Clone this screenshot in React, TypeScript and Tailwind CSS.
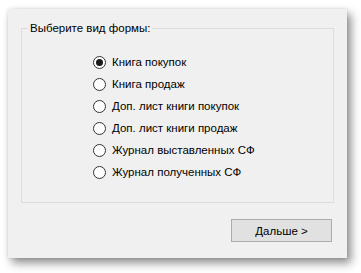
const options = [
  "Книга покупок",
  "Книга продаж",
  "Доп. лист книги покупок",
  "Доп. лист книги продаж",
  "Журнал выставленных СФ",
  "Журнал полученных СФ",
];

function Radio({ checked }: { checked: boolean }) {
  return (
    <span className="flex h-[13px] w-[13px] shrink-0 items-center justify-center rounded-full border border-[#333] bg-white">
      {checked && <span className="h-[7px] w-[7px] rounded-full bg-[#1a1a1a]" />}
    </span>
  );
}

export default function App() {
  return (
    <div className="h-[273px] w-[361px] bg-white pl-[8px] pt-[9px] font-['Liberation_Sans',sans-serif] text-[11.5px] text-black">
      <div className="flex h-[249px] w-[339px] flex-col bg-[#f0f0f0] px-[13px] pt-[11px] shadow-[4px_5px_9px_rgba(0,0,0,0.45),0_0_3px_rgba(0,0,0,0.12)]">
        <fieldset className="h-[183px] border border-[#dcdcdc] pl-[71px]">
          <legend className="-ml-[65px] px-[2px] leading-[16px]">Выберите вид формы:</legend>
          <div className="flex flex-col pt-[15px]">
            {options.map((label, i) => (
              <label key={i} className="flex h-[22px] items-center gap-[6px]">
                <Radio checked={i === 0} />
                <span className="leading-[16px]">{label}</span>
              </label>
            ))}
          </div>
        </fieldset>
        <div className="flex justify-end pt-[16px] pr-[2px]">
          <button className="h-[23px] w-[101px] border border-[#adadad] bg-[#e1e1e1] leading-[16px]">
            Дальше &gt;
          </button>
        </div>
      </div>
    </div>
  );
}
